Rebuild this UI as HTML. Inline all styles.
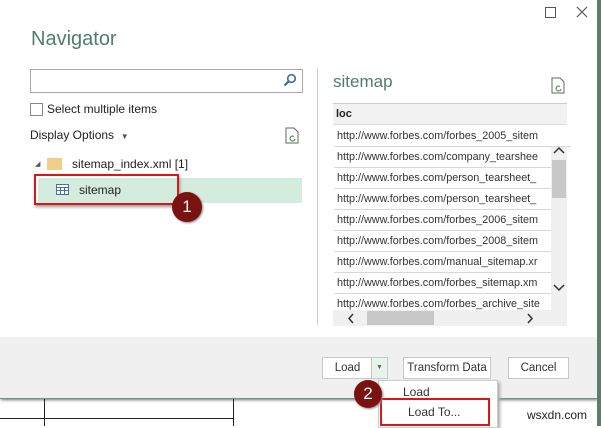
<!DOCTYPE html>
<html><head><style>
body{margin:0;width:601px;height:426px;overflow:hidden;background:#fff;font-family:"Liberation Sans",sans-serif;position:relative;font-size:12px;color:#222}
.a{position:absolute}
.row{position:absolute;left:334px;width:214px;height:20px;border-bottom:1px solid #d8d8d8;line-height:20px;padding-left:3px;font-size:10.8px;white-space:nowrap;overflow:hidden;color:#333}
.btn{position:absolute;top:357px;height:20px;border:1px solid #c8c8c8;background:#fff;line-height:20px;text-align:center;font-size:11.5px;color:#333}
.badge{position:absolute;border-radius:50%;background:#7a1212;color:#fff;text-align:center;font-size:17px;box-shadow:1px 1px 2px #888}
</style></head><body>
<div class="a" style="left:0;top:0;width:597px;height:398px;background:#fff;box-shadow:1px 2px 3px #6a7a70"></div>
<div class="a" style="left:597px;top:0;width:4px;height:426px;background:#5f7d6a"></div>
<div class="a" style="left:0;top:337px;width:597px;height:61px;background:#f0f0f0"></div>
<div class="a" style="left:0;top:398px;width:597px;height:1px;background:#7d8f84"></div>
<div class="a" style="left:44px;top:399px;width:1px;height:27px;background:#222"></div>
<div class="a" style="left:233px;top:399px;width:1px;height:27px;background:#222"></div>
<div class="a" style="left:0;top:418px;width:233px;height:1px;background:#222"></div>
<div class="a" style="left:527px;top:408px;font-size:12px;color:#222">wsxdn.com</div>
<div class="a" style="left:545px;top:7px;width:9px;height:9px;border:1px solid #555"></div>
<svg class="a" style="left:576px;top:6px" width="12" height="12"><path d="M1 1L11 11M11 1L1 11" stroke="#555" stroke-width="1.2"/></svg>
<div class="a" style="left:31px;top:28px;font-size:20px;color:#4f7d6c">Navigator</div>
<div class="a" style="left:30px;top:69px;width:271px;height:22px;border:1px solid #aaa"></div>
<svg class="a" style="left:283px;top:73px" width="14" height="14"><circle cx="8.5" cy="5.5" r="3.8" stroke="#3a6ea5" stroke-width="1.6" fill="none"/><path d="M6 8L1.5 12.5" stroke="#3a6ea5" stroke-width="2.2"/></svg>
<div class="a" style="left:30px;top:103px;width:11px;height:11px;border:1px solid #888"></div>
<div class="a" style="left:47px;top:102px;font-size:12px">Select multiple items</div>
<div class="a" style="left:30px;top:128px;font-size:12px">Display Options &nbsp;<span style="font-size:8px;color:#555">▼</span></div>
<svg class="a" style="left:285px;top:127px" width="16" height="18"><path d="M1 1H9L13 5V16H1Z" fill="none" stroke="#666"/><path d="M10 12a2.5 2.5 0 1 1 -1-2.5" stroke="#3a8a3a" fill="none"/></svg>
<div class="a" style="left:35px;top:160px;font-size:7px;color:#555">◢</div>
<div class="a" style="left:47px;top:158px;width:15px;height:12px;background:#f0cf8a"></div>
<div class="a" style="left:72px;top:157px;font-size:12px">sitemap_index.xml [1]</div>
<div class="a" style="left:38px;top:178px;width:264px;height:25px;background:#d4ecdd"></div>
<div class="a" style="left:34px;top:174px;width:141px;height:27px;border:2px solid #d81818;box-shadow:1px 2px 3px #999"></div>
<svg class="a" style="left:56px;top:184px" width="13" height="11"><rect x=".5" y=".5" width="12" height="10" fill="#fff" stroke="#4a6fa0"/><path d="M.5 3.5H12.5M.5 6.5H12.5M4.5 3.5V10.5M8.5 3.5V10.5" stroke="#4a6fa0"/></svg>
<div class="a" style="left:79px;top:183px;font-size:12px">sitemap</div>
<div class="badge" style="left:172px;top:192px;width:30px;height:30px;line-height:30px">1</div>
<div class="a" style="left:317px;top:68px;width:1px;height:257px;background:#ccc"></div>
<div class="a" style="left:333px;top:72px;font-size:17px;color:#4f7d6c">sitemap</div>
<svg class="a" style="left:551px;top:77px" width="16" height="18"><path d="M1 1H9L13 5V16H1Z" fill="none" stroke="#666"/><path d="M10 12a2.5 2.5 0 1 1 -1-2.5" stroke="#3a8a3a" fill="none"/></svg>
<div class="a" style="left:333px;top:103px;width:234px;height:223px;border-top:1px solid #ccc;background:#fff"></div>
<div class="a" style="left:333px;top:104px;width:234px;height:21px;background:#f2f2f2;border-bottom:1px solid #ddd;font-size:11px;font-weight:bold;line-height:21px;padding-left:3px;box-sizing:border-box">loc</div>
<div class="row" style="top:126px;width:234px">http://www.forbes.com/forbes_2005_sitem</div>
<div class="row" style="top:147px">http://www.forbes.com/company_tearshee</div>
<div class="row" style="top:168px">http://www.forbes.com/person_tearsheet_</div>
<div class="row" style="top:189px">http://www.forbes.com/person_tearsheet_</div>
<div class="row" style="top:210px">http://www.forbes.com/forbes_2006_sitem</div>
<div class="row" style="top:231px">http://www.forbes.com/forbes_2008_sitem</div>
<div class="row" style="top:252px">http://www.forbes.com/manual_sitemap.xr</div>
<div class="row" style="top:273px">http://www.forbes.com/forbes_sitemap.xm</div>
<div class="row" style="top:294px;border:none;height:16px">http://www.forbes.com/forbes_archive_site</div>
<div class="a" style="left:551px;top:147px;width:16px;height:163px;background:#f0f0f0"></div>
<div class="a" style="left:552px;top:160px;width:14px;height:38px;background:#c8c8c8"></div>
<svg class="a" style="left:553px;top:146px" width="12" height="8"><path d="M1 7L6 2L11 7" stroke="#333" stroke-width="1.5" fill="none"/></svg>
<svg class="a" style="left:553px;top:284px" width="12" height="8"><path d="M1 1L6 6L11 1" stroke="#333" stroke-width="1.5" fill="none"/></svg>
<div class="a" style="left:333px;top:310px;width:234px;height:16px;background:#f0f0f0"></div>
<div class="a" style="left:367px;top:311px;width:67px;height:14px;background:#c8c8c8"></div>
<svg class="a" style="left:347px;top:313px" width="8" height="11"><path d="M6 1L2 5.5L6 10" stroke="#333" stroke-width="1.5" fill="none"/></svg>
<svg class="a" style="left:526px;top:313px" width="8" height="11"><path d="M2 1L6 5.5L2 10" stroke="#333" stroke-width="1.5" fill="none"/></svg>
<div class="btn" style="left:322px;width:49px">Load</div>
<div class="btn" style="left:371px;width:15px;font-size:7px;color:#666;background:#e8f3ec">▼</div>
<div class="btn" style="left:403px;width:86px">Transform Data</div>
<div class="btn" style="left:508px;width:59px">Cancel</div>
<div class="a" style="left:378px;top:380px;width:118px;height:46px;background:#fff;border:1px solid #ccc;box-shadow:2px 2px 3px #aaa"></div>
<div class="a" style="left:403px;top:385px;font-size:12px;color:#333">Load</div>
<div class="a" style="left:380px;top:398px;width:106px;height:24px;border:2px solid #d81818"></div>
<div class="a" style="left:408px;top:405px;font-size:12px;color:#333">Load To...</div>
<div class="badge" style="left:354px;top:380px;width:28px;height:28px;line-height:28px">2</div>
</body></html>
